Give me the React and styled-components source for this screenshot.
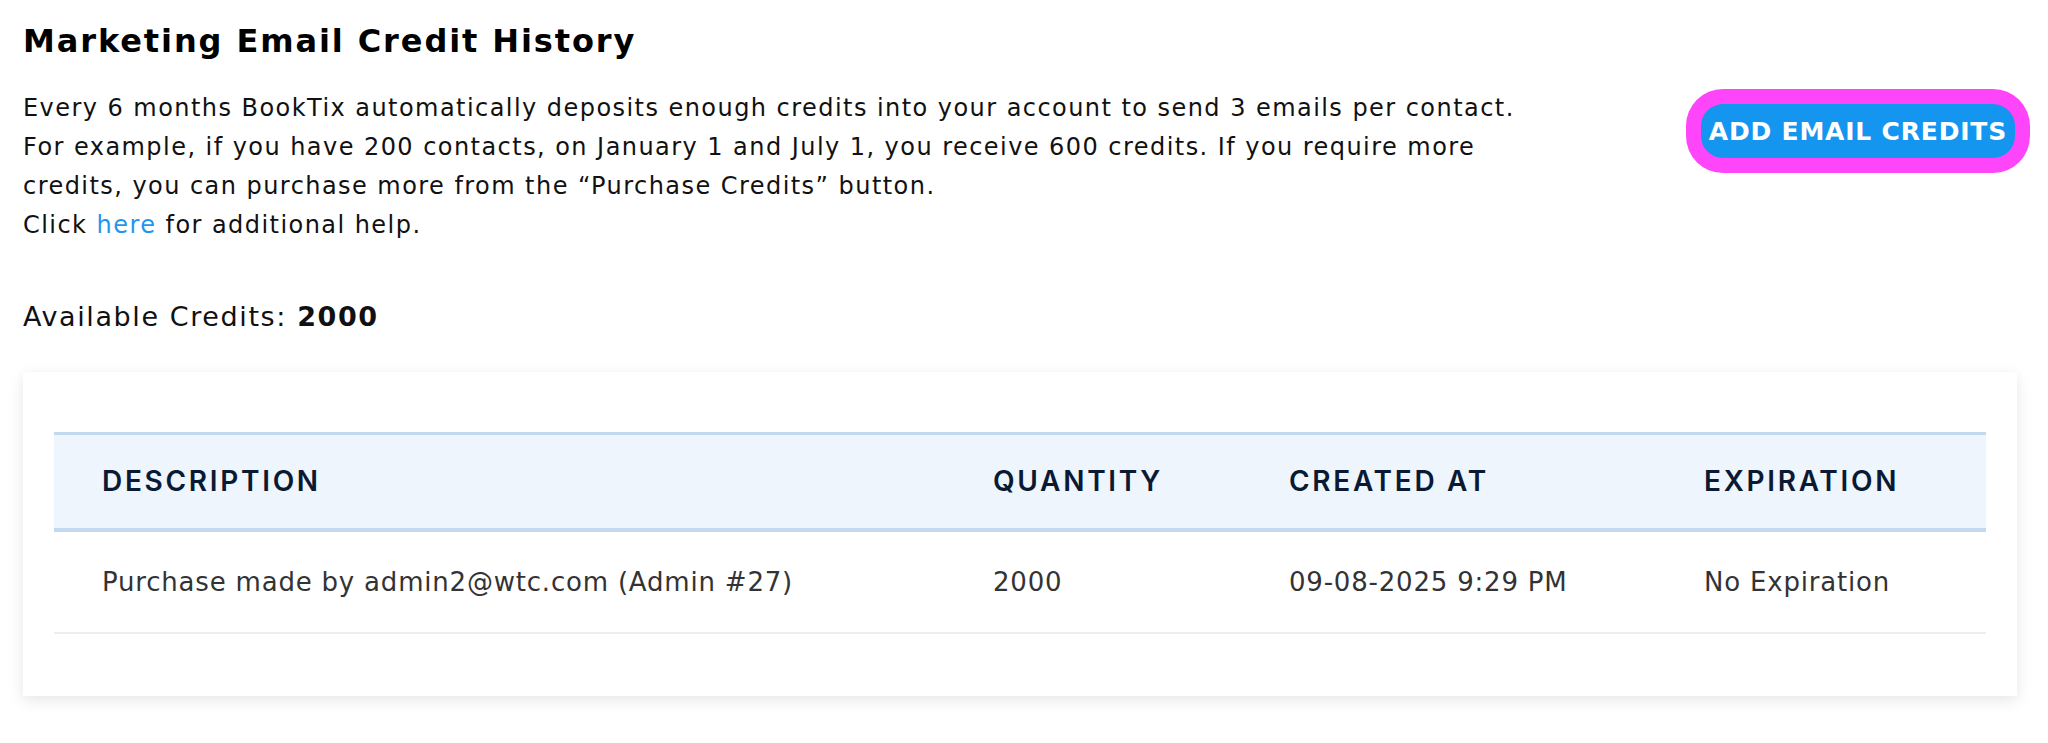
import styled, { createGlobalStyle } from "styled-components";

const GlobalStyle = createGlobalStyle`
  html, body {
    margin: 0;
    padding: 0;
    background: #ffffff;
  }
  body {
    font-family: "DejaVu Sans", Inter, sans-serif;
    color: #111111;
  }
`;

const Page = styled.main`
  padding: 21px 31px 40px 23px;
`;

const Title = styled.h1`
  margin: 0;
  font-size: 32px;
  line-height: 40px;
  font-weight: 700;
  color: #000;
  letter-spacing: 1.9px;
`;

const Intro = styled.div`
  display: flex;
  justify-content: space-between;
  align-items: flex-start;
  margin-top: 28px;
`;

const Blurb = styled.p`
  margin: 0;
  font-size: 24px;
  line-height: 39px;
  letter-spacing: 1.45px;
  white-space: nowrap;
  color: #111;
`;

const HelpLink = styled.a`
  color: #1e96f0;
  text-decoration: none;
`;

const AddButton = styled.button`
  margin: 15px 2px 0 0;
  height: 54px;
  padding: 0 8px;
  border: none;
  border-radius: 22px;
  background: #1496f0;
  color: #fff;
  font-family: "DejaVu Sans", sans-serif;
  font-size: 25px;
  font-weight: 700;
  letter-spacing: 0.8px;
  text-transform: uppercase;
  box-shadow: 0 0 0 15px #ff45fa;
  cursor: pointer;
`;

const Credits = styled.p`
  margin: 54px 0 0;
  font-size: 27px;
  line-height: 36px;
  letter-spacing: 1.6px;
  color: #111;

  strong {
    font-weight: 700;
  }
`;

const Card = styled.section`
  margin-top: 37px;
  padding: 60px 31px 62px;
  background: #fff;
  box-shadow: 0 4px 14px rgba(0, 0, 0, 0.1);
`;

const Table = styled.table`
  width: 100%;
  border-collapse: collapse;
  table-layout: fixed;
`;

const HeadCell = styled.th`
  box-sizing: border-box;
  width: ${(p) => p.$w}px;
  height: 96px;
  padding: 0 0 0 48px;
  text-align: left;
  background: #eef5fd;
  border-top: 3px solid #c3d9f0;
  border-bottom: 4px solid #c3d9f0;
  color: #0b1a33;
  font-family: Inter, sans-serif;
  font-size: 28px;
  font-weight: 600;
  letter-spacing: 2.7px;
  text-transform: uppercase;
`;

const Cell = styled.td`
  box-sizing: border-box;
  height: 103px;
  padding: 0 0 0 48px;
  border-bottom: 2px solid #eeeeee;
  color: #333;
  font-size: 26px;
  letter-spacing: 0.8px;
  white-space: nowrap;
`;

const columns = [
  { label: "Description", w: 891 },
  { label: "Quantity", w: 296 },
  { label: "Created At", w: 415 },
  { label: "Expiration", w: 330 },
];

const rows = [
  {
    description: "Purchase made by admin2@wtc.com (Admin #27)",
    quantity: 2000,
    created: "09-08-2025 9:29 PM",
    expiration: "No Expiration",
  },
];

export default function App() {
  return (
    <>
      <GlobalStyle />
      <Page>
        <Title>Marketing Email Credit History</Title>

        <Intro>
          <Blurb>
            Every 6 months BookTix automatically deposits enough credits into
            your account to send 3 emails per contact.
            <br />
            For example, if you have 200 contacts, on January 1 and July 1, you
            receive 600 credits. If you require more
            <br />
            credits, you can purchase more from the “Purchase Credits” button.
            <br />
            Click <HelpLink href="#">here</HelpLink> for additional help.
          </Blurb>
          <AddButton>Add Email Credits</AddButton>
        </Intro>

        <Credits>
          Available Credits: <strong>2000</strong>
        </Credits>

        <Card>
          <Table>
            <thead>
              <tr>
                {columns.map((c) => (
                  <HeadCell key={c.label} $w={c.w}>
                    {c.label}
                  </HeadCell>
                ))}
              </tr>
            </thead>
            <tbody>
              {rows.map((r) => (
                <tr key={r.created}>
                  <Cell>{r.description}</Cell>
                  <Cell>{r.quantity}</Cell>
                  <Cell>{r.created}</Cell>
                  <Cell>{r.expiration}</Cell>
                </tr>
              ))}
            </tbody>
          </Table>
        </Card>
      </Page>
    </>
  );
}
